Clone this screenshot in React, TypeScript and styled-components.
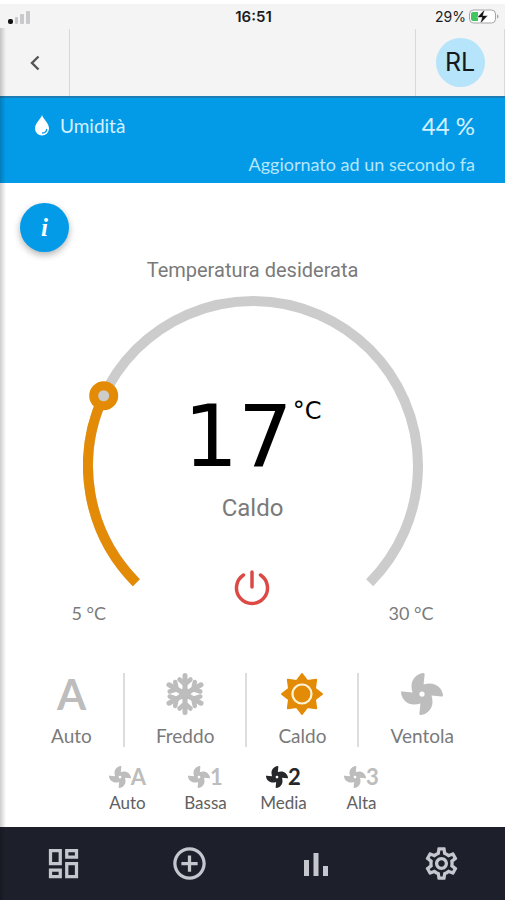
import React, { useState } from "react";
import styled, { createGlobalStyle } from "styled-components";
import { FaFan } from "react-icons/fa";
import { MdAddCircleOutline, MdOutlineDashboard, MdOutlineSettings } from "react-icons/md";

const color = {
  bar: "#f4f4f5",
  line: "#d9d9db",
  blue: "#039be8",
  orange: "#e38b06",
  track: "#cccccc",
  muted: "#bdbdbd",
  text: "#7a7a7a",
  nav: "#1d202b",
};

const GlobalStyle = createGlobalStyle`
  *, *::before, *::after { box-sizing: border-box; }
  body { margin: 0; background: #fff; font-family: "Lato", sans-serif; }
  button { margin: 0; padding: 0; border: 0; background: none; font: inherit; color: inherit; cursor: pointer; }
`;

const Screen = styled.div`
  position: relative;
  display: flex;
  flex-direction: column;
  min-height: 100vh;
  padding: 4px 2px 0 0;
`;

const EdgeShadow = styled.div`
  position: absolute;
  inset: 28px auto 0 0;
  width: 6px;
  background: linear-gradient(to right, rgba(0, 0, 0, 0.2), rgba(0, 0, 0, 0));
  pointer-events: none;
`;

const StatusBar = styled.div`
  display: grid;
  grid-template-columns: 1fr auto 1fr;
  align-items: center;
  height: 25px;
  padding: 0 6px 0 8px;
  background: ${color.bar};
  color: #1c1c1e;
  font: 14px/24px "Inter", sans-serif;
`;

const Clock = styled.time`
  font-size: 15px;
  font-weight: 600;
`;

const Battery = styled.div`
  display: flex;
  align-items: center;
  justify-content: flex-end;
  gap: 3px;
`;

const Header = styled.header`
  display: flex;
  justify-content: space-between;
  height: 67px;
  background: ${color.bar};
`;

const BackButton = styled.button`
  display: grid;
  place-items: center;
  width: 70px;
  border-right: 1px solid ${color.line};
`;

const Account = styled.div`
  display: grid;
  place-items: center;
  width: 90px;
  border-left: 1px solid ${color.line};
  border-right: 1px solid ${color.line};
`;

const Avatar = styled.button`
  width: 49px;
  height: 49px;
  border-radius: 50%;
  background: #b5e4fb;
  color: #15191c;
  font: 25px/49px "Inter", sans-serif;
`;

const Reading = styled.section`
  padding: 12px 30px 8px 34px;
  border-top: 2px solid #1c7db4;
  background: ${color.blue};
  color: #d5f1ff;
`;

const ReadingRow = styled.div`
  display: flex;
  align-items: center;
  gap: 10px;
  height: 30px;
  font-size: 19px;
`;

const ReadingValue = styled.span`
  margin-left: auto;
  font-size: 24px;
`;

const Updated = styled.p`
  margin: 13px 0 0;
  font-size: 18px;
  line-height: 22px;
  text-align: right;
  color: #b5e6fc;
`;

const Main = styled.main`
  flex: 1;
  display: flex;
  flex-direction: column;
  align-items: center;
  padding: 20px 0 14px;
`;

const InfoButton = styled.button`
  align-self: flex-start;
  width: 49px;
  height: 49px;
  margin-left: 20px;
  border-radius: 50%;
  background: ${color.blue};
  box-shadow: 0 3px 7px rgba(0, 0, 0, 0.3);
  color: #fff;
  font: italic bold 25px/49px "Liberation Serif", serif;
`;

const Title = styled.h1`
  margin: 6px 0 14px;
  font: 400 20px/24px "Roboto", sans-serif;
  color: ${color.text};
`;

const Gauge = styled.div`
  position: relative;
  display: grid;
  justify-items: center;
  width: 362px;
  height: 329px;

  > * {
    grid-area: 1 / 1;
  }
`;

const Slider = styled.input`
  position: absolute;
  top: 0;
  left: 0;
  width: 100%;
  height: 90px;
  margin: 0;
  opacity: 0;
`;

const Readout = styled.div`
  display: flex;
  flex-direction: column;
  align-items: center;
  padding-top: 95px;
`;

const Temperature = styled.output`
  display: flex;
  align-items: flex-start;
  font: 86px/90px "DejaVu Sans", sans-serif;
  color: #000;
`;

const Unit = styled.span`
  font-size: 24px;
  line-height: 40px;
`;

const ModeName = styled.span`
  margin: 13px 0 48px;
  font: 24px/28px "Roboto", sans-serif;
  color: ${color.text};
`;

const PowerButton = styled.button`
  display: grid;
  place-items: center;
  width: 36px;
  height: 36px;
`;

const Limits = styled.div`
  display: flex;
  justify-content: space-between;
  align-self: end;
  width: 100%;
  font-size: 18px;
  line-height: 24px;
  color: ${color.text};
`;

const Modes = styled.div`
  display: flex;
  margin-top: 48px;
`;

const ModeButton = styled.button<{ $active: boolean }>`
  display: flex;
  flex-direction: column;
  align-items: center;
  gap: 10px;
  padding: 0 31px;
  color: ${(p) => (p.$active ? color.orange : color.muted)};

  & + & {
    border-left: 2px solid #dddddd;
  }
`;

const ModeIcon = styled.span`
  display: grid;
  place-items: center;
  height: 42px;
  font-size: 42px;
  line-height: 42px;
  font-weight: 700;
`;

const ModeLabel = styled.span`
  font-size: 19px;
  line-height: 22px;
  color: ${color.text};
`;

const Speeds = styled.div`
  display: flex;
  margin-top: 18px;
  padding-right: 16px;
`;

const SpeedButton = styled.button<{ $active: boolean }>`
  display: flex;
  flex-direction: column;
  align-items: center;
  gap: 4px;
  width: 78px;
  color: ${(p) => (p.$active ? "#26282b" : color.muted)};
`;

const SpeedIcon = styled.span`
  display: flex;
  align-items: center;
  font-size: 22px;
  line-height: 24px;
  font-weight: 700;
`;

const SpeedLabel = styled.span`
  font-size: 17px;
  line-height: 20px;
  color: #606060;
`;

const BottomNav = styled.nav`
  display: grid;
  grid-template-columns: repeat(4, 1fr);
  height: 73px;
  background: ${color.nav};
  color: #c5c6ce;
`;

const NavButton = styled.button`
  display: grid;
  place-items: center;
`;

const CENTER = 170;
const RADIUS = 165;
const START = 135;
const SWEEP = 270;
const MIN = 5;
const MAX = 30;

function pointAt(degrees: number) {
  const a = (degrees * Math.PI) / 180;
  return { x: CENTER + RADIUS * Math.cos(a), y: CENTER + RADIUS * Math.sin(a) };
}

function arc(from: number, to: number) {
  const a = pointAt(from);
  const b = pointAt(to);
  return `M${a.x} ${a.y}A${RADIUS} ${RADIUS} 0 ${to - from > 180 ? 1 : 0} 1 ${b.x} ${b.y}`;
}

function Dial({ value }: { value: number }) {
  const angle = START + ((value - MIN) / (MAX - MIN)) * SWEEP;
  const handle = pointAt(angle);
  return (
    <svg width="340" height="300" viewBox="0 0 340 300" fill="none" strokeWidth="10" aria-hidden>
      <path d={arc(START, START + SWEEP)} stroke={color.track} />
      <path d={arc(START, angle)} stroke={color.orange} />
      <circle cx={handle.x} cy={handle.y} r="10" fill={color.track} stroke={color.orange} strokeWidth="9" />
    </svg>
  );
}

function Snowflake() {
  return (
    <svg width="42" height="42" viewBox="0 0 42 42" fill="none" stroke="currentColor" strokeLinecap="round" aria-hidden>
      {[0, 60, 120, 180, 240, 300].map((turn) => (
        <g key={turn} transform={`rotate(${turn} 21 21)`}>
          <path d="M21 21V2.500" strokeWidth="5" />
          <path d="M15.500 6.500 21 11.500l5.500-5" strokeWidth="4.500" />
        </g>
      ))}
      <circle cx="21" cy="21" r="6" fill="currentColor" stroke="none" />
    </svg>
  );
}

const sunPoints = Array.from({ length: 16 }, (_, i) => {
  const r = i % 2 ? 14 : 20;
  const a = (i * Math.PI) / 8;
  return `${21 + r * Math.sin(a)},${21 - r * Math.cos(a)}`;
}).join(" ");

function Sun() {
  return (
    <svg width="42" height="42" viewBox="0 0 42 42" fill="currentColor" aria-hidden>
      <polygon points={sunPoints} stroke="currentColor" strokeWidth="2" strokeLinejoin="round" />
      <circle cx="21" cy="21" r="9.500" stroke="#fff3d6" strokeWidth="2.200" />
    </svg>
  );
}

const modes = [
  { name: "Auto", icon: "A" },
  { name: "Freddo", icon: <Snowflake /> },
  { name: "Caldo", icon: <Sun /> },
  { name: "Ventola", icon: <FaFan /> },
];

const speeds = [
  { name: "Auto", mark: "A" },
  { name: "Bassa", mark: "1" },
  { name: "Media", mark: "2" },
  { name: "Alta", mark: "3" },
];

const temperature = 17;

export default function App() {
  const [position, setPosition] = useState(11.5);
  const [mode, setMode] = useState("Caldo");
  const [speed, setSpeed] = useState("Media");

  return (
    <>
      <GlobalStyle />
      <Screen>
        <StatusBar>
          <svg width="22" height="14" viewBox="0 0 22 14" aria-label="Segnale">
            <rect x="0" y="9" width="5" height="5" rx="2" fill="#111" />
            <rect x="7" y="7" width="3" height="7" rx="1" fill="#c9c9cb" />
            <rect x="12" y="4" width="4" height="10" rx="1" fill="#c9c9cb" />
            <rect x="18" y="1" width="4" height="13" rx="1" fill="#c9c9cb" />
          </svg>
          <Clock>16:51</Clock>
          <Battery>
            29%
            <svg width="30" height="15" viewBox="0 0 30 15" aria-label="In carica">
              <rect x="0.5" y="1" width="26" height="13" rx="4" fill="#fff" stroke="#a5a5a8" />
              <path d="M4 3h5v9H4a2 2 0 0 1-2-2V5a2 2 0 0 1 2-2Z" fill="#3fc65e" />
              <path d="M28 5.500c2 .5 2 3.500 0 4Z" fill="#a5a5a8" />
              <path d="M16 0 8 8.500h5L11 15l8-8.500h-5Z" fill="#111" stroke="#f4f4f5" strokeWidth="0.600" />
            </svg>
          </Battery>
        </StatusBar>
        <Header>
          <BackButton aria-label="Indietro">
            <svg width="10" height="16" viewBox="0 0 10 16" fill="none" stroke="#555" strokeWidth="2.400">
              <path d="M8.500 1.500 2 8l6.500 6.500" />
            </svg>
          </BackButton>
          <Account>
            <Avatar>RL</Avatar>
          </Account>
        </Header>
        <Reading>
          <ReadingRow>
            <svg width="16" height="21" viewBox="0 0 16 21" aria-hidden>
              <path d="M8 0c1.500 4.500 7 8 7 13.500a7 7 0 0 1-14 0C1 8 6.500 4.500 8 0Z" fill="#fff" />
              <path d="M8.500 18c2.500 0 4-1.500 4.200-3.700" fill="none" stroke={color.blue} strokeWidth="1.300" strokeLinecap="round" />
            </svg>
            Umidità
            <ReadingValue>44 %</ReadingValue>
          </ReadingRow>
          <Updated>Aggiornato ad un secondo fa</Updated>
        </Reading>
        <Main>
          <InfoButton aria-label="Informazioni">i</InfoButton>
          <Title id="target">Temperatura desiderata</Title>
          <Gauge>
            <Dial value={position} />
            <Readout>
              <Temperature>
                {temperature}
                <Unit>°C</Unit>
              </Temperature>
              <ModeName>{mode}</ModeName>
              <PowerButton aria-label="Accensione">
                <svg width="36" height="36" viewBox="0 0 36 36" fill="none" stroke="#dc4a45" strokeWidth="3.500" strokeLinecap="round">
                  <path d="M18 2v15M9.500 5a15.500 15.500 0 1 0 17 0" />
                </svg>
              </PowerButton>
            </Readout>
            <Slider
              type="range"
              aria-labelledby="target"
              min={MIN}
              max={MAX}
              step={0.5}
              value={position}
              onChange={(e) => setPosition(Number(e.target.value))}
            />
            <Limits>
              <span>{MIN} °C</span>
              <span>{MAX} °C</span>
            </Limits>
          </Gauge>
          <Modes>
            {modes.map((m) => (
              <ModeButton key={m.name} $active={m.name === mode} aria-pressed={m.name === mode} onClick={() => setMode(m.name)}>
                <ModeIcon>{m.icon}</ModeIcon>
                <ModeLabel>{m.name}</ModeLabel>
              </ModeButton>
            ))}
          </Modes>
          <Speeds>
            {speeds.map((s) => (
              <SpeedButton key={s.name} $active={s.name === speed} aria-pressed={s.name === speed} onClick={() => setSpeed(s.name)}>
                <SpeedIcon>
                  <FaFan size={22} />
                  {s.mark}
                </SpeedIcon>
                <SpeedLabel>{s.name}</SpeedLabel>
              </SpeedButton>
            ))}
          </Speeds>
        </Main>
        <BottomNav>
          <NavButton aria-label="Pannello">
            <MdOutlineDashboard size={39} />
          </NavButton>
          <NavButton aria-label="Aggiungi">
            <MdAddCircleOutline size={39} />
          </NavButton>
          <NavButton aria-label="Statistiche">
            <svg width="24" height="24" viewBox="0 0 24 24" fill="currentColor" aria-hidden>
              <path d="M0 8h5v16H0zM9.500 1h5v23h-5zM19 14h5v10h-5z" />
            </svg>
          </NavButton>
          <NavButton aria-label="Impostazioni">
            <MdOutlineSettings size={39} />
          </NavButton>
        </BottomNav>
        <EdgeShadow />
      </Screen>
    </>
  );
}
